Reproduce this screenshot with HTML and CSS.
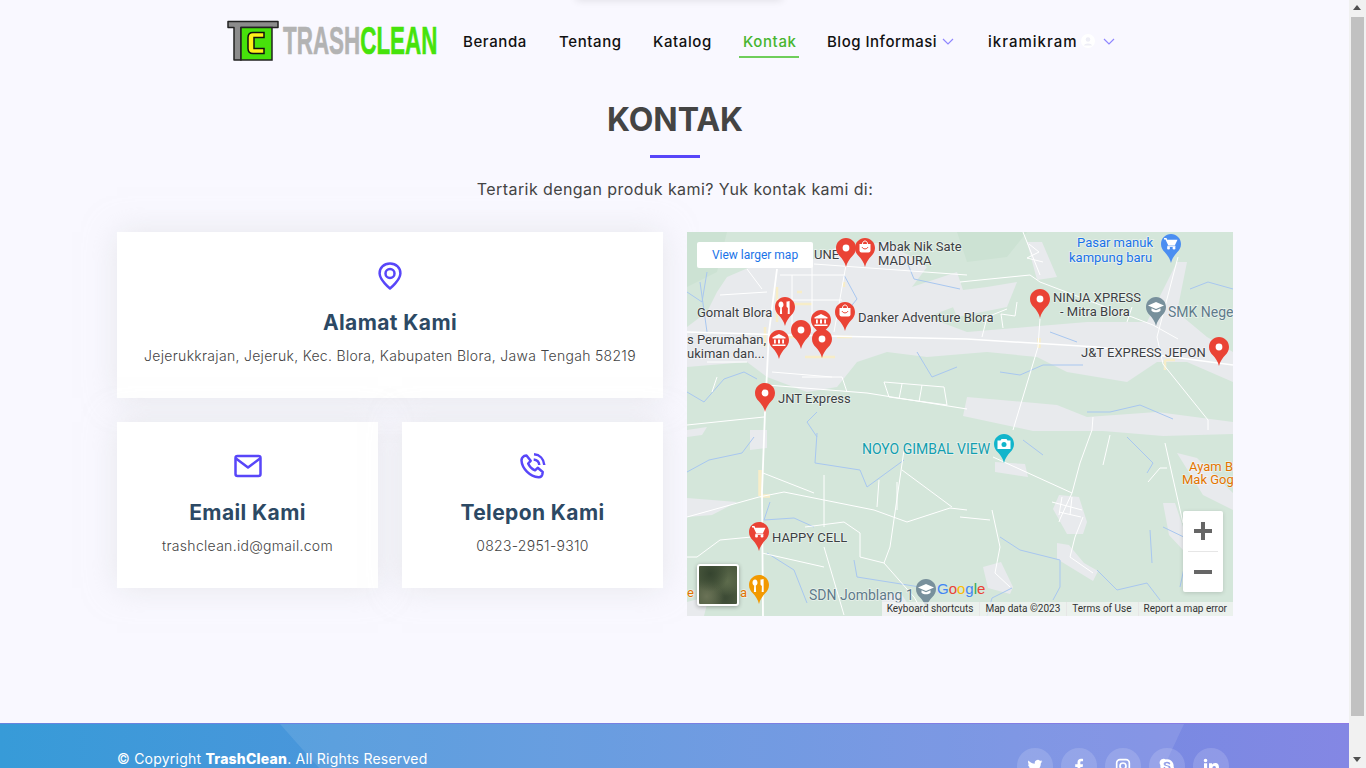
FILE: index.html
```html
<!DOCTYPE html>
<html lang="en">
<head>
  <meta charset="UTF-8">
  <title>Kontak - TrashClean</title>
  <link rel="stylesheet" href="styles.css">
</head>
<body>

  <svg class="defs" width="0" height="0">
    <defs>
      <path id="pin" d="M0 0C-5.5 0-10 4.4-10 9.9c0 3.4 1.600 5.900 3.600 8.200C-3.600 21.200-1 24.400 0 29c1-4.600 3.600-7.800 6.400-10.900C8.400 15.800 10 13.300 10 9.900 10 4.400 5.500 0 0 0z"/>
      <g id="dot"><use href="#pin" fill="#ea4335"/><circle cy="10" r="3.400" fill="#fff"/></g>
      <g id="bag"><use href="#pin" fill="#ea4335"/><path d="M-5.500 6h11v6.500a2 2 0 0 1-2 2h-7a2 2 0 0 1-2-2z" fill="#fff"/><path d="M-2.500 6c0-4 5-4 5 0" fill="none" stroke="#fff"/><path d="M-3 9c1 2.500 5 2.500 6 0" fill="none" stroke="#ea4335"/></g>
      <g id="bank"><use href="#pin" fill="#ea4335"/><path d="M0 4l6.500 3.200v1.300h-13V7.200zM-5 9.500h1.800v4H-5zM-1 9.500h2v4h-2zM3.200 9.500H5v4H3.200zM-6.500 14.500h13V16h-13z" fill="#fff"/></g>
      <g id="fork"><path d="M-4 4.500c-1.700 0-2.500 1.700-2.500 3.200 0 1.400.8 2.400 1.700 2.800l-.3 6.500h2.200l-.3-6.500c.9-.4 1.700-1.400 1.700-2.800 0-1.500-.8-3.200-2.500-3.200zM1.500 4.500v4.500c0 1 .7 1.600 1.400 1.900l-.2 6.100h2l-.1-13c-1.500.5-3.100.5-3.100.5z" fill="#fff"/></g>
      <g id="cart"><path d="M-7 4h2.500l.7 1.700H6.500L3.800 11.500h-6.500L-5.500 5.500H-7z" fill="#fff"/><circle cx="-2.500" cy="14" r="1.500" fill="#fff"/><circle cx="3" cy="14" r="1.500" fill="#fff"/><path d="M-3.800 12.300H4.500" stroke="#fff"/></g>
      <g id="grad"><path d="M0 5L8 8.500 0 12l-8-3.500z" fill="#fff"/><path d="M-4.500 11.200v2.500c2.500 2 6.500 2 9 0v-2.500L0 13.200z" fill="#fff"/></g>
    </defs>
  </svg>

  <div class="page">
    <div class="menu-shadow"></div>
    <header class="topbar">
      <a class="logo" href="#">
        <svg width="210" height="42" viewBox="0 0 210 42">
          <path d="M1 1.500h50v6H14v32.500H7V7.500H1z" fill="#8c8c8c" stroke="#222" stroke-width="1.500" stroke-linejoin="round"/>
          <rect x="14" y="7.500" width="31" height="32.500" fill="#47e20b" stroke="#222" stroke-width="1.500"/>
          <path d="M37 12.500H26q-5 0-5 5v11q0 5 5 5h11v-5H27v-11h10z" fill="#ffef1a" stroke="#111" stroke-width="1.500"/>
          <text class="logo-text" transform="translate(56 34) scale(.59 1)"><tspan class="logo-grey">TRASH</tspan><tspan class="logo-green">CLEAN</tspan></text>
        </svg>
      </a>
      <nav class="nav">
        <a class="nav-link nav-beranda" href="#">Beranda</a>
        <a class="nav-link nav-tentang" href="#">Tentang</a>
        <a class="nav-link nav-katalog" href="#">Katalog</a>
        <a class="nav-link nav-kontak active" href="#">Kontak</a>
        <a class="nav-link nav-blog" href="#">Blog Informasi
          <svg class="chev" width="12" height="7" viewBox="0 0 12 7"><path d="M1 1l5 5 5-5"/></svg>
        </a>
        <a class="nav-link nav-user" href="#">ikramikram
          <svg class="avatar" width="14" height="14" viewBox="0 0 14 14"><circle cx="7" cy="7" r="7" fill="#fff"/><circle cx="7" cy="5.500" r="2.300" fill="#eeeef6"/><path d="M2.800 11.500c.8-2.800 7.600-2.800 8.400 0" fill="#eeeef6"/></svg>
          <svg class="chev" width="12" height="7" viewBox="0 0 12 7"><path d="M1 1l5 5 5-5"/></svg>
        </a>
      </nav>
    </header>

    <main class="contact">
      <div class="section-title">
        <h2>KONTAK</h2>
        <p>Tertarik dengan produk kami? Yuk kontak kami di:</p>
      </div>

      <div class="contact-row">
        <div class="info-grid">
          <div class="info-box wide">
            <svg class="info-icon" width="30" height="30" viewBox="0 0 30 30"><path d="M15 27.500S5 19.500 4.600 12.500C4.300 6.800 9 2.500 15 2.500s10.700 4.300 10.400 10C25 19.500 15 27.500 15 27.500z"/><circle cx="15" cy="12.500" r="4.500"/></svg>
            <h3>Alamat Kami</h3>
            <p>Jejerukkrajan, Jejeruk, Kec. Blora, Kabupaten Blora, Jawa Tengah 58219</p>
          </div>
          <div class="info-box">
            <svg class="info-icon" width="30" height="30" viewBox="0 0 30 30"><rect x="2.500" y="5" width="25" height="20" rx="2"/><path d="M3 7.500l12 9 12-9"/></svg>
            <h3>Email Kami</h3>
            <p>trashclean.id@gmail.com</p>
          </div>
          <div class="info-box">
            <svg class="info-icon" width="30" height="30" viewBox="0 0 30 30"><path d="M8.500 4.500l4.200 5.300-2.500 2.700c1.200 3 3.700 5.500 6.800 6.800l2.700-2.500 5 4.200-.4 2.500c-.4 1.700-2 2.800-3.700 2.700C11.700 25.500 4 17.500 3.500 9.500c-.1-2 1-3.500 2.600-4.500z"/><path d="M16 3.300c5.700.5 9.800 4.700 10.300 10.700M15.700 8.500c3.200.3 5.300 2.400 5.600 5.500"/></svg>
            <h3>Telepon Kami</h3>
            <p>0823-2951-9310</p>
          </div>
        </div>

        <div class="map">
          <svg class="map-canvas" width="546" height="384" viewBox="0 0 546 384">
            <rect width="546" height="384" fill="#d4e6da"/>
            <path d="M0 0h40l-10 40-30 15zM270 0h70l-20 25-40 5zM55 70l25-10 5 30-30 5z" fill="#cce2d3"/>
            <!-- built up areas -->
            <g fill="#e8eaed">
              <path d="M30 60l10-15 35-15 50-2 25-13 50-5 40 25-15 20 45-15 10 30-40 15 40 15 60-5 60-5 60 0 10-20 20-40h10l-10 50 30 25 26 15v30l-46-20h-30l-30 20-60-10-30-15-50-5-60 5-40-5-30 10-20 25-30 5-40-15-20-15-60 5V95l20-15z"/>
              <path d="M340 10l15 0 15 35-20 3zM280 165l90 8 30 12 70-5 76 10v12l-70 2-60-5-70 0-70-15zM260 60l40-5 30-5-10 25-50 10z"/>
              <path d="M308 230l30 2 3 13-33-5zM372 263l20 2 8 25-4 12-16 0-14-25zM370 311l12 2 15 18 14 8-5 10-36-22zM296 335l18-5 12 25-3 7-22-6zM490 221l20 5 36 35v17l-30-15zM476 271l12 0 10 30-2 17-14-15zM0 266l50 4-25 13-25 2zM63 198h17v18l-17 2zM195 365l18-5 10 15-10 9h-18zM0 370l22-6-5 20H0zM0 198l20-3-5 8-15 2z"/>
            </g>
            <!-- yellow streets -->
            <g fill="none" stroke="#f7edc8" stroke-width="2.500">
              <path d="M90 55v35M105 72h20M78 95v20M100 105h15M118 125h30M150 105h15M157 50v5M115 60h-5"/>
              <path d="M73 238v26M73 264h10" stroke-width="3.500"/>
              <path d="M352 106v10" stroke-width="3.500"/>
              <path d="M478 128h10M478 128v10"/>
            </g>
            <!-- water -->
            <g fill="none" stroke="#a8c7f0" stroke-width="1">
              <path d="M0 240l22-12 33-7 12-16M130 201l-2 30 45 7 7 17 37-27M83 270l-6 18 30-2 20 9M167 328l3 17 63 10M80 321l27 17 13 33"/>
              <path d="M336 208l20 15M440 205l26 26-6 10M313 305l20 13 40 10v27l-7 13M410 338l20 20 30-7 13 17M463 298l2 33M476 295l27 13-10 47"/>
              <path d="M400 180h23l30-7 33 14M313 140l20 3 23-10h40M503 57l18-7 25 7M363 100l27 10M220 30l7 17 46 10M13 50l7 50M157 43l13 24-13 16M0 160l17 10 20-23 20-7 13 7"/>
              <path d="M130 205l-10-15 10-10M0 60l15 10 5-30M300 384l5-18 20-10M230 120l15 25 25-10"/>
            </g>
            <!-- roads -->
            <g fill="none" stroke="#fff" stroke-width="1">
              <path d="M90 37L82 100 78 180 75 260l1 124" stroke-width="1.800"/>
              <path d="M0 100l140 4 140 3 130 8 136 18" stroke-width="1.500"/>
              <path d="M80 153l100 8 100 16M0 193l77-8" stroke-width="1.200"/>
              <path d="M0 285l72-20 25-5 90 18 33 12 43-14 17 2"/>
              <path d="M76 241l51 20M306 225l79 36 8-30 12-33 1-13M385 261l-12 26-1 3M353 87l-2 28-25 83M336 0l17 43M273 50l70-7 10 7 113 43 25 14"/>
              <path d="M491 25l-21 80 6 27 45 56v10M478 211l18 80M217 218l-14 97-6 16 30 34 11 19M215 238l50 37M210 250v28M192 248l-2 27M137 243v52M137 315l20 68M33 308l-23 17H0M33 308l42-4M75 321l62 14M118 295l39-5 16 11v24l24 6"/>
              <path d="M305 278l8 37-5 26 15 14M273 285l30 3M383 325l5-20 8-20M383 325l23 16M423 203l-7 30M461 250l12-14h7"/>
              <path d="M159 33l-12 67M127 32l153 11M33 63l47-3M60 37l15 20M93 43h65M90 68h65M105 43v57M125 30v70M197 150l60 5 3 18-58-8zM215 152l-3 15M235 153l-3 17"/>
              <path d="M20 130l40 0M30 145l-5 15M115 145h40l5 15M85 140l60 5M365 270l30 8M372 280l22 5M375 265l-3 18M385 265l-2 18M342 12l10 8-12 6 16 4M330 70l-2 14-14-2 2 14M440 90l5-15M295 105l5-20 20-8"/>
            </g>
            <!-- labels -->
            <g class="m-label" transform="translate(0 1)">
              <text x="127" y="26" class="t-dark">UNE</text>
              <text x="191" y="18" class="t-dark">Mbak Nik Sate</text>
              <text x="191" y="32" class="t-dark">MADURA</text>
              <text x="10" y="84" class="t-dark">Gomalt Blora</text>
              <text x="171" y="89" class="t-dark">Danker Adventure Blora</text>
              <text x="0" y="111" class="t-dark">s Perumahan,</text>
              <text x="0" y="125" class="t-dark">ukiman dan...</text>
              <text x="91" y="170" class="t-dark">JNT Express</text>
              <text x="366" y="69" class="t-dark">NINJA XPRESS</text>
              <text x="373" y="83" class="t-dark">- Mitra Blora</text>
              <text x="394" y="124" class="t-dark">J&amp;T EXPRESS JEPON</text>
              <text x="390" y="14" class="t-blue">Pasar manuk</text>
              <text x="382" y="29" class="t-blue">kampung baru</text>
              <text x="481" y="84" class="t-grey big">SMK Nege</text>
              <text x="175" y="221" class="t-teal big">NOYO GIMBAL VIEW</text>
              <text x="502" y="238" class="t-orange">Ayam B</text>
              <text x="495" y="251" class="t-orange">Mak Gog</text>
              <text x="85" y="309" class="t-dark">HAPPY CELL</text>
              <text x="122" y="367" class="t-grey big">SDN Jomblang 1</text>
              <text x="0" y="364" class="t-orange">e</text>
              <text x="53" y="364" class="t-orange">a</text>
            </g>
            <!-- pins -->
            <use href="#dot" x="159" y="6"/>
            <use href="#bag" x="178" y="6"/>
            <use href="#pin" x="98" y="65" fill="#ea4335"/><use href="#fork" x="98" y="65"/>
            <use href="#bag" x="158" y="70"/>
            <use href="#bank" x="134" y="78"/>
            <use href="#dot" x="114" y="88"/>
            <use href="#dot" x="135" y="97"/>
            <use href="#bank" x="92" y="98"/>
            <use href="#dot" x="78" y="151"/>
            <use href="#dot" x="353" y="57"/>
            <use href="#dot" x="532" y="105"/>
            <use href="#pin" x="484" y="2" fill="#4b8ef1"/><use href="#cart" x="484" y="2"/>
            <use href="#pin" x="469" y="65" fill="#78909c"/><use href="#grad" x="469" y="65"/>
            <use href="#pin" x="317" y="202" fill="#12b5cb"/>
            <g transform="translate(317 202)"><path d="M-6.500 6.500h3l1-1.500h5l1 1.500h3v8.500h-13z" fill="#fff"/><circle cy="10.500" r="2.500" fill="#12b5cb"/></g>
            <use href="#pin" x="72" y="290" fill="#ea4335"/><use href="#cart" x="72" y="290"/>
            <use href="#pin" x="72" y="343" fill="#f29900"/><use href="#fork" x="72" y="343"/>
            <use href="#pin" x="239" y="347" fill="#78909c"/><use href="#grad" x="239" y="347"/>
            <!-- google logo -->
            <text class="g-logo" x="250" y="362"><tspan fill="#4285f4">G</tspan><tspan fill="#ea4335">o</tspan><tspan fill="#fbbc05">o</tspan><tspan fill="#4285f4">g</tspan><tspan fill="#34a853">l</tspan><tspan fill="#ea4335">e</tspan></text>
          </svg>

          <a class="map-larger" href="#">View larger map</a>
          <div class="map-thumb"></div>
          <div class="map-zoom">
            <button class="zoom-btn" type="button"><svg width="20" height="20" viewBox="0 0 20 20"><path d="M8 1h4v7h7v4h-7v7H8v-7H1V8h7z"/></svg></button>
            <button class="zoom-btn minus" type="button"><svg width="20" height="20" viewBox="0 0 20 20"><path d="M1 8h18v4H1z"/></svg></button>
          </div>
          <div class="map-attr">
            <span>Keyboard shortcuts</span>
            <span>Map data ©2023</span>
            <span>Terms of Use</span>
            <span>Report a map error</span>
          </div>
        </div>
      </div>
    </main>

    <footer class="footer">
      <div class="footer-shape"></div>
      <div class="footer-inner">
        <p class="copy">© Copyright <strong>TrashClean</strong>. All Rights Reserved</p>
        <div class="socials">
          <a class="social" href="#"><svg width="16" height="16" viewBox="0 0 24 24"><path d="M23 5c-.8.400-1.700.600-2.600.700.900-.600 1.700-1.400 2-2.500-.900.500-1.800.900-2.900 1.100A4.600 4.600 0 0 0 11.700 8.500C7.900 8.300 4.500 6.500 2.200 3.700c-1.200 2.100-.600 4.800 1.400 6.100-.700 0-1.400-.200-2.100-.600 0 2.200 1.600 4.100 3.700 4.600-.700.200-1.400.200-2.100.100.600 1.800 2.300 3.100 4.300 3.200A9.300 9.300 0 0 1 .6 19c2.100 1.300 4.500 2.100 7.100 2.100 8.600 0 13.400-7.200 13.100-13.700.900-.600 1.700-1.400 2.200-2.400z"/></svg></a>
          <a class="social" href="#"><svg width="16" height="16" viewBox="0 0 24 24"><path d="M14 24V13.500h3.500l.5-4h-4V7c0-1.200.3-2 2-2h2.100V1.400C17.700 1.300 16.500 1.200 15 1.200c-3.100 0-5.200 1.900-5.200 5.300v3H6.300v4h3.500V24z"/></svg></a>
          <a class="social" href="#"><svg width="16" height="16" viewBox="0 0 24 24" class="outline"><rect x="2.500" y="2.500" width="19" height="19" rx="5"/><circle cx="12" cy="12" r="4.500"/></svg></a>
          <a class="social" href="#"><svg width="16" height="16" viewBox="0 0 24 24"><path fill-rule="evenodd" d="M7 1a6 6 0 0 1 3.500 1.100c.5 0 1-.1 1.500-.1 5.500 0 10 4.500 10 10 0 .5 0 1-.1 1.500A6 6 0 0 1 17 23a6 6 0 0 1-3.500-1.100H12C6.500 22 2 17.500 2 12c0-.5 0-1 .1-1.500A6 6 0 0 1 7 1zm5 4.500c-3 0-5 1.300-5 3.500 0 4 7.500 2.500 7.500 5 0 1-1.200 1.500-2.500 1.500-3 0-2.500-2-4-2-.7 0-1.200.5-1.200 1.200 0 1.800 2.200 3.300 5.200 3.300 3.300 0 5.300-1.500 5.300-3.800 0-4.200-7.500-2.800-7.500-5 0-.8 1-1.200 2.200-1.200 2.500 0 2.300 1.600 3.700 1.600.7 0 1.200-.5 1.200-1.200 0-1.500-2.300-2.900-4.900-2.900z"/></svg></a>
          <a class="social" href="#"><svg width="16" height="16" viewBox="0 0 24 24"><path d="M1.500 8h4.700v15H1.500zM3.800 1a2.700 2.700 0 1 1 0 5.400 2.700 2.700 0 0 1 0-5.400zM9 8h4.500v2c.7-1.200 2.300-2.400 4.700-2.400 5 0 5.800 3.200 5.800 7.400v8h-4.700v-7c0-1.700 0-3.900-2.400-3.900s-2.700 1.800-2.700 3.800v7.100H9z"/></svg></a>
        </div>
      </div>
    </footer>
  </div>

  <div class="scrollbar">
    <span class="arrow up"></span>
    <span class="thumb"></span>
    <span class="arrow down"></span>
  </div>

</body>
</html>
```

FILE: styles.css
```css
* {
  box-sizing: border-box;
}
html, body {
  height: 100%;
}
body {
  margin: 0;
  display: flex;
  height: 768px;
  overflow: hidden;
  font-family: Inter, "Open Sans", sans-serif;
  color: #444;
  background-color: #f9f8ff;
}
a {
  text-decoration: none;
  color: inherit;
}
.defs {
  position: absolute;
}
.page {
  position: relative;
  flex: 1;
  min-width: 0;
  height: 768px;
  display: flex;
  flex-direction: column;
  overflow: hidden;
}
/* shadow of the closed dropdown peeking in at the top edge */
.menu-shadow {
  position: absolute;
  left: 576px;
  top: -8px;
  width: 206px;
  height: 8px;
  box-shadow: 0 0 8px rgba(0, 0, 0, 0.12);
}

/* header */
.topbar {
  height: 82px;
  display: flex;
  align-items: center;
  padding-left: 227px;
}
.logo {
  display: block;
  height: 42px;
  margin-right: 26px;
}
.logo-text {
  font-family: "Liberation Sans", sans-serif;
  font-weight: 700;
  font-size: 38px;
  stroke-width: 0.6;
}
.logo-grey {
  fill: #b3b3b3;
  stroke: #b3b3b3;
}
.logo-green {
  fill: #46e30b;
  stroke: #46e30b;
}
.nav {
  display: flex;
  align-items: center;
}
.nav-link {
  position: relative;
  display: flex;
  align-items: center;
  height: 34px;
  font-size: 15px;
  font-weight: 500;
  letter-spacing: 0.6px;
  color: #111;
  white-space: nowrap;
}
.nav-beranda { width: 96px; }
.nav-tentang { width: 94px; }
.nav-katalog { width: 90px; }
.nav-kontak { width: 84px; color: #47b52f; }
.nav-blog { width: 161px; letter-spacing: 0.5px; }
.nav-user { letter-spacing: 1px; }
.nav-kontak.active::after {
  content: "";
  position: absolute;
  left: -4px;
  bottom: 0;
  width: 60px;
  height: 2px;
  background-color: #6fce5b;
}
.chev {
  fill: none;
  stroke: #8f86ff;
  stroke-width: 1.2;
  margin-left: 5px;
}
.avatar {
  margin-left: 4px;
}
.nav-user .chev {
  margin-left: 8px;
}

/* contact */
.contact {
  flex: 1;
  padding: 0 116px 0 117px;
}
.section-title {
  text-align: center;
}
.section-title h2 {
  position: relative;
  margin: 0;
  padding: 18px 0 18px;
  font-size: 32px;
  line-height: 40px;
  font-weight: 700;
  color: #444;
}
.section-title h2::after {
  content: "";
  position: absolute;
  left: 50%;
  bottom: 0;
  width: 50px;
  height: 3px;
  margin-left: -25px;
  background-color: #5846f9;
}
.section-title p {
  margin: 19px 0 31px;
  font-size: 16px;
  line-height: 24px;
  letter-spacing: 0.42px;
  color: #444;
}
.contact-row {
  display: grid;
  grid-template-columns: 546px 546px;
  gap: 24px;
}
.info-grid {
  display: grid;
  grid-template-columns: 261px 261px;
  grid-template-rows: 166px 166px;
  gap: 24px;
}
.info-box {
  background-color: #fff;
  box-shadow: 0 0 30px rgba(214, 215, 216, 0.5);
  padding: 29px 10px 0;
  text-align: center;
}
.info-box.wide {
  grid-column: 1 / 3;
}
.info-icon {
  display: block;
  margin: 0 auto;
  fill: none;
  stroke: #5846f9;
  stroke-width: 2.5;
  stroke-linejoin: round;
}
.info-box h3 {
  margin: 18px 0 8px;
  font-size: 21px;
  line-height: 28px;
  font-weight: 700;
  letter-spacing: 0.4px;
  color: #2c4964;
}
.info-box p {
  margin: 0;
  font-size: 14px;
  line-height: 21px;
  font-weight: 300;
  letter-spacing: 0.3px;
  color: #444;
}

/* map */
.map {
  position: relative;
  width: 546px;
  height: 384px;
  overflow: hidden;
}
.map-canvas {
  display: block;
}
.m-label text {
  font-family: Roboto, sans-serif;
  font-size: 13px;
  font-weight: 400;
  paint-order: stroke;
  stroke: rgba(255, 255, 255, 0.5);
  stroke-width: 1.5px;
}
.m-label text.big {
  font-size: 14px;
}
.t-dark { fill: #3c4043; }
.t-blue { fill: #1a73e8; }
.t-grey { fill: #5f7a8a; }
.t-teal { fill: #129eaf; }
.t-orange { fill: #e37400; }
.g-logo {
  font-family: "Liberation Sans", sans-serif;
  font-size: 15px;
}
.map-larger {
  position: absolute;
  left: 10px;
  top: 10px;
  width: 116px;
  height: 26px;
  background-color: #fff;
  border-radius: 2px;
  font-family: Roboto, sans-serif;
  font-size: 12px;
  line-height: 26px;
  text-align: center;
  color: #1a73e8;
}
.map-thumb {
  position: absolute;
  left: 10px;
  top: 332px;
  width: 42px;
  height: 42px;
  border: 2px solid #fff;
  border-radius: 3px;
  box-shadow: 0 1px 4px rgba(0, 0, 0, 0.3);
  background-color: #4c5a3f;
  background-image:
    radial-gradient(circle at 30% 20%, #35442f 0, transparent 45%),
    radial-gradient(circle at 75% 40%, #5d6b4c 0, transparent 40%),
    radial-gradient(circle at 20% 80%, #6a7256 0, transparent 40%),
    radial-gradient(circle at 70% 85%, #3c4a35 0, transparent 35%);
}
.map-zoom {
  position: absolute;
  left: 496px;
  top: 279px;
  width: 40px;
  height: 81px;
  background-color: #fff;
  border-radius: 2px;
  box-shadow: 0 1px 4px rgba(0, 0, 0, 0.15);
  padding: 0 5px;
}
.zoom-btn {
  display: flex;
  align-items: center;
  justify-content: center;
  width: 30px;
  height: 40px;
  padding: 0;
  border: 0;
  background: none;
}
.zoom-btn svg {
  fill: #666;
}
.zoom-btn.minus {
  height: 41px;
  border-top: 1px solid #e6e6e6;
}
.map-attr {
  position: absolute;
  right: 0;
  bottom: 0;
  display: flex;
  align-items: center;
  height: 14px;
  background-color: rgba(245, 245, 245, 0.7);
  font-family: Roboto, sans-serif;
  font-size: 10px;
  color: #333;
}
.map-attr span {
  padding: 0 6px 0 5px;
  border-left: 1px solid #e6e6e6;
  line-height: 14px;
}
.map-attr span:first-child {
  border-left: 0;
}

/* footer */
.footer {
  position: relative;
  height: 45px;
  flex: none;
  overflow: hidden;
  background: linear-gradient(90deg, #379bd8 0%, #8487e4 100%);
  border-top: 1px solid rgba(150, 110, 230, 0.5);
}
.footer-shape {
  position: absolute;
  inset: 0;
  background-color: rgba(255, 255, 255, 0.1);
  clip-path: polygon(280px 0, 1184px 0, 1163px 45px, 320px 45px);
}
.footer-inner {
  position: relative;
  display: flex;
  justify-content: space-between;
  padding: 24px 120px 0 117px;
}
.copy {
  margin: 0;
  font-size: 14px;
  line-height: 22px;
  letter-spacing: 0.22px;
  color: #fff;
}
.copy strong {
  font-weight: 800;
}
.socials {
  display: flex;
  gap: 8px;
}
.social {
  display: flex;
  align-items: center;
  justify-content: center;
  width: 36px;
  height: 36px;
  border-radius: 50%;
  background-color: rgba(255, 255, 255, 0.15);
}
.social svg {
  fill: #fff;
}
.social .outline {
  fill: none;
  stroke: #fff;
  stroke-width: 2.5;
}

/* fake browser scrollbar */
.scrollbar {
  flex: none;
  width: 17px;
  height: 768px;
  display: flex;
  flex-direction: column;
  align-items: center;
  background-color: #f1f1f1;
}
.thumb {
  flex: none;
  width: 13px;
  height: 699px;
  background-color: #c1c1c1;
}
.arrow {
  flex: none;
  height: 17px;
  width: 17px;
  position: relative;
}
.arrow::after {
  content: "";
  position: absolute;
  left: 4px;
  border-left: 4px solid transparent;
  border-right: 4px solid transparent;
}
.arrow.up::after {
  top: 5px;
  border-bottom: 5px solid #505050;
}
.arrow.down {
  margin-top: auto;
}
.arrow.down::after {
  top: 6px;
  border-top: 5px solid #505050;
}
```
